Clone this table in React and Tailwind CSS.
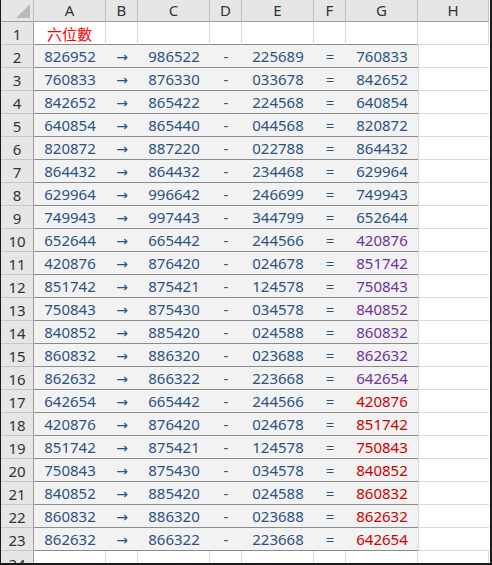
import React from "react";

const rows = [
  ["826952", "986522", "225689", "760833", "b"],
  ["760833", "876330", "033678", "842652", "b"],
  ["842652", "865422", "224568", "640854", "b"],
  ["640854", "865440", "044568", "820872", "b"],
  ["820872", "887220", "022788", "864432", "b"],
  ["864432", "864432", "234468", "629964", "b"],
  ["629964", "996642", "246699", "749943", "b"],
  ["749943", "997443", "344799", "652644", "b"],
  ["652644", "665442", "244566", "420876", "p"],
  ["420876", "876420", "024678", "851742", "p"],
  ["851742", "875421", "124578", "750843", "p"],
  ["750843", "875430", "034578", "840852", "p"],
  ["840852", "885420", "024588", "860832", "p"],
  ["860832", "886320", "023688", "862632", "p"],
  ["862632", "866322", "223668", "642654", "p"],
  ["642654", "665442", "244566", "420876", "r"],
  ["420876", "876420", "024678", "851742", "r"],
  ["851742", "875421", "124578", "750843", "r"],
  ["750843", "875430", "034578", "840852", "r"],
  ["840852", "885420", "024588", "860832", "r"],
  ["860832", "886320", "023688", "862632", "r"],
  ["862632", "866322", "223668", "642654", "r"],
];

const gridCols = "grid grid-cols-[33px_72px_32px_72px_32px_72px_32px_72px_71px]";
const cols = ["A", "B", "C", "D", "E", "F", "G", "H"];

function RowHead({ n }) {
  return (
    <div className="h-[23px] bg-[#e6e6e6] border-r border-r-[#9e9e9e] border-b border-b-[#c6c6c6] flex items-center justify-center text-[15px] text-[#333333] leading-none overflow-hidden pt-[2px]">
      {n}
    </div>
  );
}

export default function App() {
  return (
    <div
      className="w-[492px] h-[565px] bg-white border-l border-r-2 border-b-2 border-[#1a1a1a] overflow-hidden"
      style={{ fontFamily: '"Noto Sans", "Noto Sans CJK TC", sans-serif' }}
    >
      {/* header */}
      <div className={`${gridCols} h-[22px]`}>
        <div className="relative bg-[#e6e6e6] border-r border-r-[#c0c0c0] border-b border-b-[#9e9e9e]">
          <div className="absolute right-[3px] bottom-[3px] w-0 h-0 border-l-[14px] border-l-transparent border-b-[14px] border-b-[#b9b9b9]" />
        </div>
        {cols.map((c) => (
          <div
            key={c}
            className="bg-[#e6e6e6] border-r border-r-[#c0c0c0] border-b border-b-[#9e9e9e] flex items-center justify-center text-[15px] text-[#333333] leading-none"
          >
            {c}
          </div>
        ))}
      </div>
      {/* row 1 */}
      <div className={gridCols}>
        <RowHead n={1} />
        <div className="h-[23px] border-r border-r-[#d9d9d9] border-b border-b-[#8a8a8a] flex items-center justify-center text-[15px] text-[#ff0000] leading-none" style={{ fontFamily: '"Noto Sans CJK TC", sans-serif' }}>
          六位數
        </div>
        {[0, 1, 2, 3, 4, 5].map((i) => (
          <div key={i} className="h-[23px] border-r border-r-[#d9d9d9] border-b border-b-[#8a8a8a]" />
        ))}
        <div className="h-[23px] border-r border-r-[#d9d9d9] border-b border-b-[#d9d9d9]" />
      </div>
      {rows.map((r, idx) => {
        const box = "h-[23px] bg-[#f2f2f2] border-b border-b-[#8a8a8a] flex items-center justify-center leading-none";
        const base = `${box} text-[15px]`;
        const blue = `${base} text-[#2b5283]`;
        const gCell =
          r[4] === "p"
            ? `${base} text-[#7030a0]`
            : r[4] === "r"
            ? `${base} text-[#cc0000]`
            : blue;
        return (
          <div key={idx} className={gridCols}>
            <RowHead n={idx + 2} />
            <div className={blue}>{r[0]}</div>
            <div className={`${box} text-[14px] text-[#2b5283] font-['DejaVu_Sans',sans-serif] pt-[1px]`}>→</div>
            <div className={blue}>{r[1]}</div>
            <div className={blue}>-</div>
            <div className={blue}>{r[2]}</div>
            <div className={blue}>=</div>
            <div className={gCell}>{r[3]}</div>
            <div className="h-[23px] border-l border-l-[#d9d9d9] border-b border-b-[#d9d9d9]" />
          </div>
        );
      })}
      {/* row 24 partial */}
      <div className={gridCols}>
        <div className="h-[12px] bg-[#e6e6e6] border-r border-r-[#9e9e9e] flex items-start justify-center text-[15px] text-[#333333] leading-none overflow-hidden pt-[6px]">
          24
        </div>
        {cols.map((c) => (
          <div key={c} className="h-[12px] border-r border-r-[#d9d9d9]" />
        ))}
      </div>
    </div>
  );
}
